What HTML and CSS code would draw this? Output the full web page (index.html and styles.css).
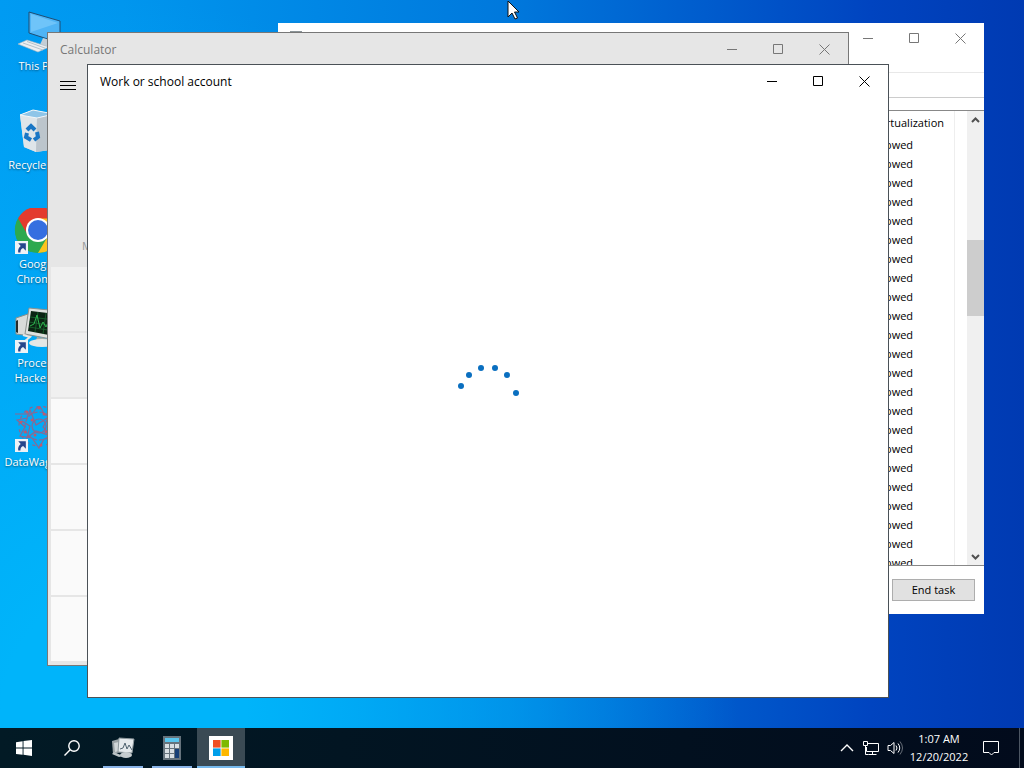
FILE: index.html
```html
<!DOCTYPE html>
<html lang="en">
<head>
  <meta charset="UTF-8" />
  <meta name="viewport" content="width=device-width, initial-scale=1" />
  <title>Desktop</title>
  <link rel="stylesheet" href="styles.css">
</head>
<body>
  <svg class="defs">
    <symbol id="min" viewBox="0 0 12 12"><path d="M0 6.500h10" /></symbol>
    <symbol id="max" viewBox="0 0 12 12"><path d="M.5 1.500h9v9H.5z" /></symbol>
    <symbol id="close" viewBox="0 0 12 12"><path d="M.5 1.500l10 10M10.500 1.500l-10 10" /></symbol>
    <symbol id="shortcut" viewBox="0 0 12 12">
      <path d="M0 0h12v12H0z" fill="#eef2f6" />
      <path d="M3 2h7v7L7.500 6.500C5.500 7.500 5 8.500 5 10.500H3C2.500 8 3.500 6 5.300 4.500z" fill="#26468c" />
    </symbol>
  </svg>

  <main class="desktop">
    <nav class="icons">
      <a class="icon" href="#">
        <svg viewBox="0 0 48 48">
          <path d="M16 2l31 9v22L16 23z" fill="#4fb4f5" stroke="#1f4d73" />
          <path d="M18 4l27 9-27 9z" fill="#86cffb" opacity=".6" />
          <path d="M30 28l10 3v6H26z" fill="#c3ced6" />
          <path d="M14 30l22 7-11 5-20-8z" fill="#eceff1" stroke="#aab7c0" stroke-width=".6" />
          <path d="M10 33l20 7M14 31.500l19 7" stroke="#b6c1c9" />
        </svg>
        <span>This PC</span>
      </a>
      <a class="icon" href="#">
        <svg viewBox="0 0 48 48">
          <path d="M7 6l13-5 21 4-4 36-14 2-12-5z" fill="#d5dbe0" />
          <path d="M7 6l17 3-1 34-12-5z" fill="#dfe5e9" />
          <path d="M24 9l17-4-4 36-14 2z" fill="#bcc5cc" />
          <path d="M7 6l13-5 21 4-17 4z" fill="#8fc5e8" stroke="#f4f7f9" />
          <g fill="none" stroke="#1976c5" stroke-width="4">
            <path d="M14 21l4-4 4 4" />
            <path d="M24 23l1 5-4 3" />
            <path d="M18 31l-5-3 1-4" />
          </g>
        </svg>
        <span>Recycle Bin</span>
      </a>
      <a class="icon" href="#">
        <svg viewBox="0 0 48 48">
          <circle cx="25" cy="22" r="23" fill="#2da94f" />
          <path d="M25 22L5 10.500A23 23 0 0 1 45 10.500z" fill="#e33b2e" />
          <path d="M25 10.500h20A23 23 0 0 1 25 45l10-17z" fill="#fcc31e" />
          <path d="M5 10.500l10 17.300 8-17z" fill="#e33b2e" />
          <path d="M5 10.500l10 17.300L25 33l-7 11A23 23 0 0 1 5 10.500z" fill="#2da94f" />
          <circle cx="25" cy="22" r="12" fill="#fff" />
          <circle cx="25" cy="22" r="10" fill="#356fe0" />
          <use href="#shortcut" x="2" y="33" width="13" height="13" />
        </svg>
        <span>Google Chrome</span>
      </a>
      <a class="icon" href="#">
        <svg viewBox="0 0 48 48">
          <path d="M3 11l12-4 3 22-15-2z" fill="#d9dcda" stroke="#86908c" />
          <path d="M3 14v11l2 1V13z" fill="#252b29" />
          <path d="M16 1l30 3-3 29-31-6z" fill="#dfe2df" stroke="#8b918e" />
          <path d="M18 4l25 3-2 22-26-5z" fill="#0b2413" />
          <path d="M17 10l25 3M16 15l25 4M16 20l25 4M25 5l-3 20M33 6l-3 21" stroke="#1b6a31" stroke-width=".8" />
          <path d="M17 19l4-2 3-9 3 13 3-6 3 5 4-8 3 8" fill="none" stroke="#2eb44e" />
          <path d="M24 30l12 2 1 5H22z" fill="#a7adaa" />
          <ellipse cx="29" cy="36" rx="13" ry="4" fill="#e4e7e5" />
          <path d="M10 28l7 2-5 4" fill="none" stroke="#e4e7e5" stroke-width="2" />
          <use href="#shortcut" x="2" y="33" width="13" height="13" />
        </svg>
        <span>Process Hacker 2</span>
      </a>
      <a class="icon" href="#">
        <svg viewBox="0 0 48 48">
          <g fill="none" stroke="#8d6790" stroke-width="1.200">
            <circle cx="26" cy="20" r="7" />
            <circle cx="26" cy="20" r="14" stroke-dasharray="4 2" />
            <circle cx="26" cy="20" r="20" stroke-dasharray="3 4" />
            <path d="M2 8h17l7-9 6 10 14 2-7 9 6 12-14 1-5 9-7-10-12-2 5-9-8-7 10-2 3-8 6 15 13-8-6 10 8 9-15-5-9 7 3-12-8-5" />
          </g>
          <g fill="#bd5a70">
            <circle cx="14" cy="6" r="1.500" /><circle cx="26" cy="2" r="1.500" /><circle cx="8" cy="16" r="1.500" />
            <circle cx="19" cy="14" r="1.500" /><circle cx="31" cy="8" r="1.500" /><circle cx="22" cy="29" r="1.500" />
            <circle cx="12" cy="26" r="1.500" /><circle cx="28" cy="39" r="1.500" /><circle cx="33" cy="26" r="1.500" />
          </g>
          <use href="#shortcut" x="2" y="33" width="13" height="13" />
        </svg>
        <span>DataWagons</span>
      </a>
    </nav>

    <section class="window task-manager">
      <header class="titlebar">
        <span class="app-mark"></span>
        <div class="controls">
          <button aria-label="Minimize"><svg><use href="#min" /></svg></button>
          <button aria-label="Maximize"><svg><use href="#max" /></svg></button>
          <button aria-label="Close"><svg><use href="#close" /></svg></button>
        </div>
      </header>
      <div class="menu-row"></div>
      <div class="tab-row"></div>
      <div class="process-list">
        <table>
          <thead><tr><th>Virtualization</th></tr></thead>
          <tbody>
            <tr><td>Allowed</td></tr>
            <tr><td>Allowed</td></tr>
            <tr><td>Allowed</td></tr>
            <tr><td>Allowed</td></tr>
            <tr><td>Allowed</td></tr>
            <tr><td>Allowed</td></tr>
            <tr><td>Allowed</td></tr>
            <tr><td>Allowed</td></tr>
            <tr><td>Allowed</td></tr>
            <tr><td>Allowed</td></tr>
            <tr><td>Allowed</td></tr>
            <tr><td>Allowed</td></tr>
            <tr><td>Allowed</td></tr>
            <tr><td>Allowed</td></tr>
            <tr><td>Allowed</td></tr>
            <tr><td>Allowed</td></tr>
            <tr><td>Allowed</td></tr>
            <tr><td>Allowed</td></tr>
            <tr><td>Allowed</td></tr>
            <tr><td>Allowed</td></tr>
            <tr><td>Allowed</td></tr>
            <tr><td>Allowed</td></tr>
            <tr><td>Allowed</td></tr>
          </tbody>
        </table>
        <div class="scrollbar">
          <button aria-label="Scroll up"><svg viewBox="0 0 9 6"><path d="M1 5l3.500-3.500L8 5" /></svg></button>
          <div class="track"><div class="thumb"></div></div>
          <button aria-label="Scroll down"><svg viewBox="0 0 9 6"><path d="M1 1l3.500 3.500L8 1" /></svg></button>
        </div>
      </div>
      <footer class="actions">
        <button class="end-task">End task</button>
      </footer>
    </section>

    <section class="window calculator">
      <header class="titlebar">
        <h2>Calculator</h2>
        <div class="controls">
          <button aria-label="Minimize"><svg><use href="#min" /></svg></button>
          <button aria-label="Maximize"><svg><use href="#max" /></svg></button>
          <button aria-label="Close"><svg><use href="#close" /></svg></button>
        </div>
      </header>
      <button class="hamburger" aria-label="Open navigation">
        <svg viewBox="0 0 16 10"><path d="M0 .5h16M0 4.500h16M0 8.500h16" /></svg>
      </button>
      <div class="memory"><span>MC</span></div>
      <div class="keys">
        <div class="key function"></div>
        <div class="key function"></div>
        <div class="key"></div>
        <div class="key"></div>
        <div class="key"></div>
        <div class="key"></div>
      </div>
    </section>

    <section class="window account">
      <header class="titlebar">
        <h2>Work or school account</h2>
        <div class="controls">
          <button aria-label="Minimize"><svg><use href="#min" /></svg></button>
          <button aria-label="Maximize"><svg><use href="#max" /></svg></button>
          <button aria-label="Close"><svg><use href="#close" /></svg></button>
        </div>
      </header>
      <div class="loading">
        <svg viewBox="0 0 64 64" role="img" aria-label="Loading">
          <circle cx="5" cy="21" r="3" />
          <circle cx="13" cy="10" r="3" />
          <circle cx="25" cy="3" r="3" />
          <circle cx="39" cy="3" r="3" />
          <circle cx="51" cy="10" r="3" />
          <circle cx="60" cy="28" r="3" />
        </svg>
      </div>
    </section>

    <svg class="cursor" viewBox="0 0 13 20"><path d="M1 1v16l4-4 3 6 2.500-1-3-6H12z" fill="#fff" stroke="#111" /></svg>
  </main>

  <footer class="taskbar">
    <button aria-label="Start">
      <svg class="glyph" viewBox="0 0 16 16"><path d="M0 2.200l6.600-1v6.400H0zM7.500 1.100L16 0v7.600H7.500zM0 8.400h6.600v6.400L0 13.900zM7.500 8.400H16V16l-8.500-1.200z" fill="#fff" /></svg>
    </button>
    <button aria-label="Search">
      <svg class="glyph" viewBox="0 0 16 16"><circle cx="10" cy="6" r="5.200" fill="none" stroke="#fff" stroke-width="1.400" /><path d="M6.200 9.800L.5 15.500" stroke="#fff" stroke-width="1.400" /></svg>
    </button>
    <div class="running-apps">
      <button class="running" aria-label="Task Manager">
        <svg viewBox="0 0 24 24">
          <path d="M1 5l7-2 2 13-8 2z" fill="#9ca4a7" />
          <path d="M3 7l5-1v9l-4 1z" fill="#d0d6d8" />
          <path d="M8 2l15 1-2 14-14-1z" fill="#e5eaec" stroke="#8c979c" />
          <path d="M9 13l3-1 2-5 2 6 2-4 3 5" fill="none" stroke="#506470" />
          <ellipse cx="15" cy="19" rx="6" ry="3" fill="#c6cdd0" />
          <path d="M3 16l9 4-4 1-7-3z" fill="#bac2c5" />
        </svg>
      </button>
      <button class="running" aria-label="Calculator">
        <svg viewBox="0 0 24 24">
          <path d="M3 0h18v24H3z" fill="#66737c" />
          <path d="M5 2h14v4H5z" fill="#59c5ed" />
          <path d="M5 8h4v4H5zM10 8h4v4h-4zM15 8h4v4h-4zM5 13h4v4H5zM10 13h4v4h-4zM5 18h4v4H5zM10 18h4v4h-4z" fill="#d9dfe3" />
          <path d="M15 13h4v9h-4z" fill="#173f75" />
        </svg>
      </button>
      <button class="running active" aria-label="Work or school account">
        <svg viewBox="0 0 24 24">
          <path d="M0 0h24v24H0z" fill="#fff" />
          <path d="M4 4h7.600v7.600H4z" fill="#f04e23" />
          <path d="M12.400 4H20v7.600h-7.600z" fill="#7db900" />
          <path d="M4 12.400h7.600V20H4z" fill="#009fea" />
          <path d="M12.400 12.400H20V20h-7.600z" fill="#fdb800" />
        </svg>
      </button>
    </div>
    <div class="tray">
      <button aria-label="Show hidden icons"><svg viewBox="0 0 16 16"><path d="M2 11l6-6 6 6" stroke-width="1.400" /></svg></button>
      <button aria-label="Network"><svg viewBox="0 0 16 16"><path d="M5 3.500h10.500v8H3.500V7M9.500 11.500v3M5.500 14.500h8M.5 1.500h4v4h-4zM2.500 5.500v9h3" /></svg></button>
      <button aria-label="Volume"><svg viewBox="0 0 16 16"><path d="M1 5.500h2.500L7 2.500v11l-3.500-3H1zM9 5.500q2 2.500 0 5M11 3.500q3.500 4.500 0 9" /><path d="M13 1.500q5 6.500 0 13" opacity=".4" /></svg></button>
      <button class="clock"><time>1:07 AM</time><time>12/20/2022</time></button>
      <button class="notifications" aria-label="Notifications"><svg viewBox="0 0 16 16"><path d="M.5 1.500h15v11H11l-2.500 2.500L6 12.500H.5z" /></svg></button>
      <button class="show-desktop" aria-label="Show desktop"></button>
    </div>
  </footer>
</body>
</html>
```
FILE: styles.css
```css
:root {
  --accent: #0a6fc0;
  --frame: #4a5157;
  --muted: #777;
}

* {
  box-sizing: border-box;
}

body {
  margin: 0;
  height: 100vh;
  display: flex;
  flex-direction: column;
  overflow: hidden;
  font-family: "Open Sans", "Noto Sans", sans-serif;
  font-size: 11px;
  line-height: 15px;
  color: #000;
}

button {
  font: inherit;
  color: inherit;
  padding: 0;
  border: none;
  background: none;
}

h2 {
  margin: 0;
  font-size: 12px;
  font-weight: 400;
}

svg {
  display: block;
}

.defs {
  position: absolute;
  width: 0;
  height: 0;
}

.desktop {
  flex: 1;
  position: relative;
  min-height: 0;
  background:
    radial-gradient(ellipse 60% 100% at 12% 100%, #00b4fa 20%, rgba(0, 180, 250, 0) 100%),
    linear-gradient(90deg, #009bf2 0%, #0096ee 12%, #0078dc 50%, #0044c0 85%, #003ab2 100%);
}

/* Desktop shortcuts */
.icons {
  display: flex;
  flex-direction: column;
  width: 74px;
  padding-top: 10px;
}

.icon {
  height: 99px;
  display: flex;
  flex-direction: column;
  align-items: center;
  color: #fff;
  text-align: center;
  text-decoration: none;
  text-shadow: 0 1px 2px rgba(0, 0, 0, 0.5);
}

.icon svg {
  width: 48px;
  height: 48px;
}

/* Windows */
.window {
  position: absolute;
  display: flex;
  flex-direction: column;
  background: #fff;
}

.titlebar {
  display: flex;
  align-items: center;
  justify-content: space-between;
  height: 32px;
  flex: none;
}

.titlebar h2 {
  padding-left: 12px;
}

.controls {
  display: flex;
}

.controls button {
  width: 46px;
  height: 32px;
  display: flex;
  align-items: center;
  justify-content: center;
}

.controls svg {
  width: 12px;
  height: 12px;
  fill: none;
  stroke: currentColor;
}

.task-manager {
  inset: 23px 40px 114px 278px;
  overflow: hidden;
}

.task-manager .titlebar {
  height: 29px;
  color: var(--muted);
}

.app-mark {
  width: 12px;
  height: 13px;
  margin-left: 12px;
  background: #8b9498;
}

.menu-row {
  height: 21px;
  flex: none;
  border-bottom: 1px solid #e8e8e8;
}

.tab-row {
  height: 25px;
  flex: none;
  border-bottom: 1px solid #ccc;
}

.process-list {
  flex: 1;
  min-height: 0;
  display: flex;
  justify-content: flex-end;
  margin-top: 12px;
  overflow: hidden;
  border-top: 1px solid #888;
  border-bottom: 1px solid #888;
}

.process-list table {
  border-collapse: collapse;
  margin-right: 12px;
  align-self: flex-start;
}

.process-list th,
.process-list td {
  width: 92px;
  height: 19px;
  padding: 0 0 0 10px;
  border-right: 1px solid #eee;
  font-weight: 400;
  text-align: left;
}

.process-list th {
  height: 24px;
  padding: 0 0 2px 14px;
}

.scrollbar {
  width: 17px;
  display: flex;
  flex-direction: column;
  background: #f0f0f0;
}

.scrollbar button {
  height: 17px;
  display: flex;
  align-items: center;
  justify-content: center;
}

.scrollbar svg {
  width: 9px;
  height: 6px;
  fill: none;
  stroke: #505050;
  stroke-width: 2;
}

.track {
  flex: 1;
  padding-top: 112px;
}

.thumb {
  height: 76px;
  background: #cdcdcd;
}

.actions {
  display: flex;
  justify-content: flex-end;
  padding: 13px 9px;
}

.end-task {
  width: 83px;
  height: 22px;
  padding-bottom: 2px;
  background: #e1e1e1;
  border: 1px solid #adadad;
}

.calculator {
  inset: 32px 175px 62px 47px;
  background: #e6e6e6;
  border: 1px solid #777;
}

.calculator .titlebar {
  color: var(--muted);
}

.hamburger {
  width: 40px;
  height: 42px;
  display: flex;
  align-items: center;
  justify-content: center;
}

.hamburger svg {
  width: 16px;
  height: 10px;
  stroke: #000;
}

.memory {
  flex: 1;
  display: flex;
  align-items: flex-end;
  padding: 0 34px 14px;
  color: #999;
}

.keys {
  display: grid;
  grid-auto-rows: 64px;
  gap: 2px;
  padding: 0 3px 4px;
  background: #e6e6e6;
}

.key {
  background: #fafafa;
}

.key.function {
  background: #f0f0f0;
}

.account {
  inset: 64px 135px 30px 87px;
  border: 1px solid var(--frame);
}

.loading {
  flex: 1;
  display: flex;
  align-items: center;
  justify-content: center;
}

.loading svg {
  width: 64px;
  height: 64px;
  fill: var(--accent);
}

.cursor {
  position: absolute;
  top: 0;
  left: 507px;
  width: 13px;
  height: 20px;
}

/* Taskbar */
.taskbar {
  height: 40px;
  flex: none;
  display: flex;
  background: linear-gradient(90deg, #021a25, #020b1c);
  color: #fff;
}

.taskbar button {
  display: flex;
  align-items: center;
  justify-content: center;
}

.taskbar > button {
  width: 48px;
}

.glyph {
  width: 16px;
  height: 16px;
}

.running-apps {
  display: flex;
  gap: 1px;
  padding-left: 3px;
}

.running {
  width: 48px;
  background: linear-gradient(#8ab4e8, #8ab4e8) center bottom / 40px 2px no-repeat;
}

.running svg {
  width: 24px;
  height: 24px;
}

.active {
  background: #3a4a54;
  border-bottom: 2px solid #76b9ed;
  padding-top: 2px;
}

.tray {
  margin-left: auto;
  display: flex;
}

.tray button {
  width: 24px;
}

.tray svg {
  width: 16px;
  height: 16px;
  fill: none;
  stroke: #fff;
}

.tray .clock {
  width: 64px;
  flex-direction: column;
  line-height: 18px;
}

.tray .notifications {
  width: 48px;
  padding-right: 8px;
}

.tray .show-desktop {
  width: 5px;
  border-left: 1px solid #4c5663;
}
```
